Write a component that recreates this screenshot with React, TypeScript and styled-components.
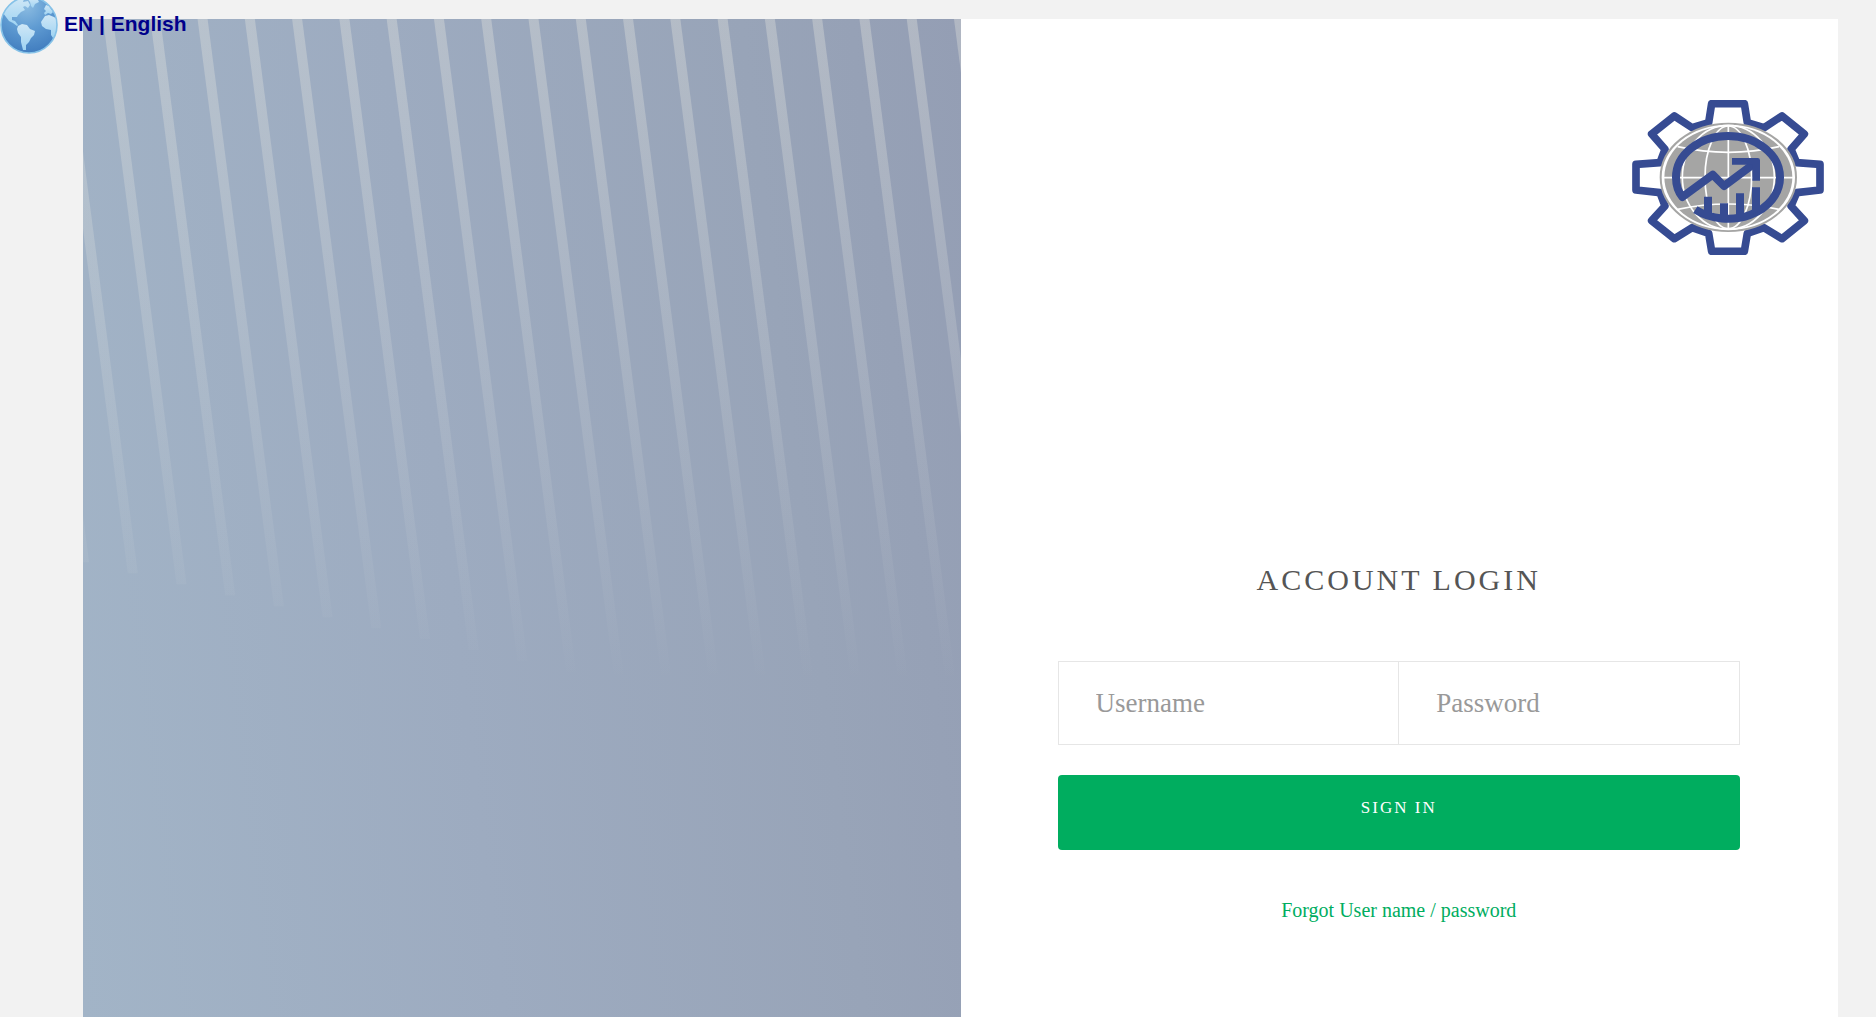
import React from "react";
import styled, { createGlobalStyle } from "styled-components";

const GlobalStyle = createGlobalStyle`
  *, *::before, *::after { box-sizing: border-box; }
  body {
    margin: 0;
    background: #f2f2f2;
    font-family: "Liberation Serif", "Times New Roman", serif;
  }
`;

const Page = styled.div`
  position: relative;
  display: flex;
  min-height: 100vh;
  padding: 19px 38px 0 83px;
`;

const LanguageLink = styled.a`
  position: absolute;
  top: -5px;
  left: 0;
  display: flex;
  gap: 4px;
  color: #00008b;
  font: bold 21px/24px "Liberation Sans", Arial, sans-serif;
  text-decoration: none;
`;

const LanguageName = styled.span`
  padding-top: 17px;
`;

const Card = styled.main`
  flex: 1;
  display: grid;
  grid-template-columns: 1fr 1fr;
  background: #fff;
`;

const ArtPanel = styled.div`
  position: relative;
  overflow: hidden;
  background: linear-gradient(83deg, #a2b4c7 0%, #9dabc0 42%, #98a4b8 78%, #949eb4 100%);
`;

const Artwork = styled.svg`
  position: absolute;
  inset: 0;
  width: 100%;
  height: 100%;
`;

const LoginPanel = styled.section`
  display: flex;
  flex-direction: column;
`;

const Logo = styled.svg`
  align-self: flex-end;
  width: 192px;
  height: 155px;
  margin: 81px 14px 0 0;
`;

const LoginForm = styled.form`
  display: flex;
  flex-direction: column;
  padding: 307px 98px 60px 97px;
`;

const Title = styled.h1`
  margin: 0 0 63px;
  color: #555;
  font-size: 30px;
  font-weight: 400;
  line-height: 36px;
  letter-spacing: 3px;
  text-align: center;
  text-transform: uppercase;
`;

const Fields = styled.div`
  display: flex;
  height: 84px;
  margin-bottom: 30px;
  border: 1px solid #e6e6e6;
`;

const Field = styled.label`
  flex: 1;
  display: flex;

  & + & {
    border-left: 1px solid #e6e6e6;
  }
`;

const TextBox = styled.input`
  width: 100%;
  min-width: 0;
  padding: 0 37px;
  border: 0;
  outline: 0;
  background: transparent;
  color: #555;
  font: inherit;
  font-size: 27px;

  &::placeholder {
    color: #999;
    opacity: 1;
  }
`;

const SignInButton = styled.button`
  padding: 19px 30px 29px;
  border: 0;
  border-radius: 4px;
  background: #00ad5f;
  color: #fff;
  font-family: inherit;
  font-size: 17px;
  line-height: 27px;
  letter-spacing: 2px;
  text-transform: uppercase;
  cursor: pointer;
`;

const ForgotLink = styled.a`
  align-self: center;
  margin-top: 45px;
  color: #00ad5f;
  font-size: 20px;
  line-height: 30px;
  text-decoration: none;
`;

const STRIPE_GAP = 47.25;
const STRIPE_SLOPE = 0.13;

function Stripes() {
  const stripes = Array.from({ length: 21 }, (_, i) => {
    const n = i - 2;
    const x = 20 + n * STRIPE_GAP;
    const bottom = 565 + n * 11;
    const shift = bottom * STRIPE_SLOPE;
    return `M${x} 0h10L${x + 10 + shift} ${bottom}h-10Z`;
  });
  return (
    <Artwork viewBox="0 0 877 998" preserveAspectRatio="xMinYMin slice" aria-hidden="true">
      <defs>
        <linearGradient id="fade" gradientUnits="userSpaceOnUse" x1="0" y1="0" x2="0" y2="665">
          <stop offset="0" stopColor="#e6e6df" stopOpacity="0.35" />
          <stop offset="0.48" stopColor="#e6e8e4" stopOpacity="0.19" />
          <stop offset="1" stopColor="#e6e8e4" stopOpacity="0" />
        </linearGradient>
      </defs>
      {stripes.map((d) => (
        <path key={d} d={d} fill="url(#fade)" />
      ))}
    </Artwork>
  );
}

function Globe() {
  return (
    <svg width="60" height="60" viewBox="0 0 60 60" aria-hidden="true">
      <defs>
        <radialGradient id="sea" cx="0.45" cy="0.15" r="0.85">
          <stop offset="0" stopColor="#8dbde2" />
          <stop offset="0.5" stopColor="#5f9bd2" />
          <stop offset="1" stopColor="#417dbf" />
        </radialGradient>
        <linearGradient id="land" x1="0" y1="0" x2="0" y2="1">
          <stop offset="0" stopColor="#cfe7f6" />
          <stop offset="1" stopColor="#9fd3f2" />
        </linearGradient>
        <clipPath id="disc">
          <circle cx="29" cy="30" r="28" />
        </clipPath>
      </defs>
      <circle cx="29" cy="30" r="28" fill="url(#sea)" />
      <g clipPath="url(#disc)" fill="url(#land)">
        <path d="M3 18 L7 8 L14 3 L24 4 L23 7 L28 6 L30 10 L28 13 L25 11 L23 12 L25 15 L21 17 L18 20 L17 22 L15 22 L12 22 L12 25 L15 26 L18 30 L17 31 L13 28 L9 26 L6 22Z" />
        <path d="M18 31 L22 29 L27 30 L30 34 L35 36 L34 40 L31 43 L29 47 L26 50 L26 55 L23 55 L21 47 L21 42 L18 38 L17 34Z" />
        <path d="M27 3 L37 3 L39 7 L35 9 L33 13 L31 11 L30 7Z" />
        <path d="M44 14 L46 10 L49 11 L53 17 L51 19 L48 18 L45 20 L44 18 L46 16Z" />
        <path d="M45 21 L49 20 L54 22 L58 25 L58 34 L55 42 L53 43 L51 40 L51 35 L46 34 L42 31 L41 27Z" />
      </g>
      <circle cx="29" cy="30" r="28" fill="none" stroke="#86c2e8" strokeWidth="1.6" />
    </svg>
  );
}

function CompanyLogo() {
  return (
    <Logo viewBox="66 60 576 465" role="img" aria-label="Company logo">
      <path
        d="M305 71H403L412 128L462 143L516 108L583 162L543 208L560 248L630 253V330L560 338L543 378L583 422L516 476L462 443L412 460L403 514H305L296 460L246 443L193 476L125 422L165 378L150 338L78 330V253L150 248L165 208L125 162L193 108L246 143L296 128Z"
        fill="#fff"
        stroke="#364b92"
        strokeWidth="23"
        strokeLinejoin="round"
      />
      <ellipse cx="355" cy="292" rx="203" ry="161" fill="#fff" stroke="#a5a5a4" strokeWidth="6" />
      <ellipse cx="355" cy="292" rx="192" ry="153" fill="#a5a5a4" />
      <g fill="none" stroke="#fff" strokeWidth="5">
        <path d="M355 137V447M160 293H550" />
        <ellipse cx="355" cy="292" rx="70" ry="154" />
        <ellipse cx="355" cy="292" rx="138" ry="156" />
        <path d="M203 200Q355 234 507 200M203 388Q355 356 507 388" />
      </g>
      <path
        d="M256 389A156 124 0 0 0 510 292A156 124 0 0 0 354 168A156 124 0 0 0 198 292Q198 328 217 351L308 284L342 318L434 250"
        fill="none"
        stroke="#364b92"
        strokeWidth="24"
        strokeLinejoin="round"
      />
      <path
        d="M366 234H443Q450 234 450 241V302H427V254H366ZM282 350H306V402H282ZM330 370H354V418H330ZM378 340H402V412H378ZM426 322H450V392L426 404Z"
        fill="#364b92"
      />
    </Logo>
  );
}

export default function App() {
  return (
    <>
      <GlobalStyle />
      <Page>
        <Card>
          <ArtPanel>
            <Stripes />
          </ArtPanel>
          <LoginPanel>
            <CompanyLogo />
            <LoginForm onSubmit={(event) => event.preventDefault()}>
              <Title>Account Login</Title>
              <Fields>
                <Field>
                  <TextBox type="text" name="username" placeholder="Username" aria-label="Username" />
                </Field>
                <Field>
                  <TextBox type="password" name="password" placeholder="Password" aria-label="Password" />
                </Field>
              </Fields>
              <SignInButton type="submit">Sign in</SignInButton>
              <ForgotLink href="#forgot">Forgot User name / password</ForgotLink>
            </LoginForm>
          </LoginPanel>
        </Card>
        <LanguageLink href="#language">
          <Globe />
          <LanguageName>EN | English</LanguageName>
        </LanguageLink>
      </Page>
    </>
  );
}
